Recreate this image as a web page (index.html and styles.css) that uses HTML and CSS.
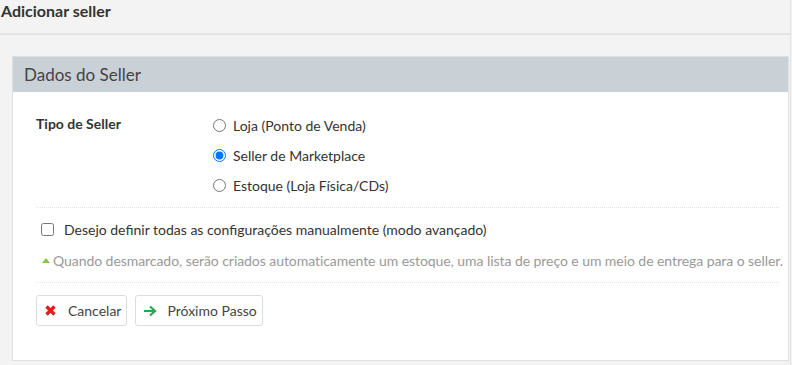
FILE: index.html
```html
<!DOCTYPE html>
<html lang="pt-BR">
<head>
    <meta charset="UTF-8">
    <title>Adicionar seller</title>
    <link rel="stylesheet" href="styles.css">
</head>
<body>
    <div class="page-header">
        <h1>Adicionar seller</h1>
    </div>

    <div class="panel">
        <div class="panel-heading">Dados do Seller</div>
        <div class="panel-body">
            <div class="form-row">
                <label class="row-label">Tipo de Seller</label>
                <div class="options">
                    <label class="radio"><input type="radio" name="tipo"> Loja (Ponto de Venda)</label>
                    <label class="radio"><input type="radio" name="tipo" checked> Seller de Marketplace</label>
                    <label class="radio"><input type="radio" name="tipo"> Estoque (Loja Física/CDs)</label>
                </div>
            </div>

            <div class="separator"></div>

            <label class="check"><input type="checkbox"> Desejo definir todas as configurações manualmente (modo avançado)</label>
            <p class="help"><span class="caret"></span>Quando desmarcado, serão criados automaticamente um estoque, uma lista de preço e um meio de entrega para o seller.</p>

            <div class="separator"></div>

            <div class="actions">
                <button class="btn">
                    <svg width="11" height="11" viewBox="0 0 11 11"><path d="M1.5 1.5 L9.5 9.5 M9.5 1.5 L1.5 9.5" stroke="#d9221c" stroke-width="3.4"/></svg>
                    Cancelar
                </button>
                <button class="btn btn-next">
                    <svg width="14" height="12" viewBox="0 0 14 12"><path d="M1 6 H12 M7 1.5 L12 6 L7 10.5" fill="none" stroke="#2ea44f" stroke-width="2.2"/></svg>
                    Próximo Passo
                </button>
            </div>
        </div>
    </div>
</body>
</html>
```

FILE: styles.css
```css
body {
    margin: 0;
    background-color: #f3f3f3;
    font-family: Lato, "Open Sans", sans-serif;
    font-size: 14px;
    color: #333;
    width: 790px;
    border-right: 1px solid #e2e2e2;
    min-height: 365px;
}
.page-header {
    height: 33px;
    border-bottom: 2px solid #e4e4e4;
}
h1 {
    margin: 0;
    padding: 1px 0 0 1px;
    font-size: 16px;
    line-height: 20px;
    font-weight: bold;
    color: #333;
}
.panel {
    margin: 21px 1px 0 12px;
    background-color: white;
    border: 1px solid #e0e0e0;
}
.panel-heading {
    background-color: #c9d0d6;
    height: 35px;
    line-height: 35px;
    padding-left: 11px;
    font-size: 17px;
    color: #444;
}
.panel-body {
    padding: 18px 9px 34px 23px;
}
.form-row {
    display: flex;
}
.row-label {
    width: 177px;
    font-weight: bold;
    line-height: 30px;
    margin-top: -1px;
}
.options {
    display: flex;
    flex-direction: column;
}
.radio {
    display: flex;
    align-items: center;
    height: 30px;
}
.radio input, .check input {
    margin: 0 7px 0 0;
    width: 13px;
    height: 13px;
}
.separator {
    border-top: 1px dotted #e3e3e3;
    margin: 7px 0 0 0;
}
.check {
    display: flex;
    align-items: center;
    height: 30px;
    margin: 6px 0 0 5px;
}
.check input {
    margin-right: 10px;
}
.help {
    margin: 7px 0 11px 6px;
    color: #999;
    line-height: 20px;
    white-space: nowrap;
    letter-spacing: -0.06px;
}
.caret {
    display: inline-block;
    width: 0;
    height: 0;
    border-left: 4px solid transparent;
    border-right: 4px solid transparent;
    border-bottom: 5px solid #8bc34a;
    margin-right: 3px;
    vertical-align: 3px;
}
.actions {
    display: flex;
    gap: 8px;
    margin-top: 12px;
}
.btn {
    display: flex;
    align-items: center;
    gap: 12px;
    height: 31px;
    padding: 0 5px 0 8px;
    background-color: white;
    border: 1px solid #ddd;
    border-radius: 3px;
    font-family: inherit;
    font-size: 14px;
    color: #444;
}
.btn-next {
    gap: 10px;
    padding-left: 7px;
}
```
